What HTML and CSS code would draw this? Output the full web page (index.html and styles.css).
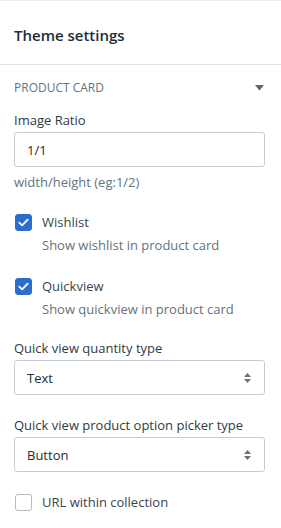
FILE: index.html
```html
<!DOCTYPE html>
<html lang="en">
<head>
  <meta charset="UTF-8" />
  <meta name="viewport" content="width=device-width, initial-scale=1.0" />
  <title>Theme settings</title>
  <link rel="stylesheet" href="styles.css">
</head>
<body>
  <div class="panel">

    <!-- Header -->
    <div class="panel-header">
      <div class="panel-title">Theme settings</div>
    </div>

    <!-- Product card section -->
    <div class="section">
      <div class="section-head">
        <span>PRODUCT CARD</span>
        <svg class="caret" width="9" height="6" viewBox="0 0 9 6"><path d="M0 0h9L4.5 5.5z" fill="#5c6670"/></svg>
      </div>

      <div class="field">
        <label class="field-label">Image Ratio</label>
        <div class="input">1/1</div>
        <div class="help">width/height (eg:1/2)</div>
      </div>

      <div class="check-field">
        <div class="check-row">
          <span class="checkbox checked">
            <svg width="11" height="9" viewBox="0 0 11 9"><path d="M1.3 4.6l2.8 2.7L9.7 1.6" fill="none" stroke="#fff" stroke-width="1.8" stroke-linecap="round" stroke-linejoin="round"/></svg>
          </span>
          <span class="check-label">Wishlist</span>
        </div>
        <div class="check-help">Show wishlist in product card</div>
      </div>

      <div class="check-field last">
        <div class="check-row">
          <span class="checkbox checked">
            <svg width="11" height="9" viewBox="0 0 11 9"><path d="M1.3 4.6l2.8 2.7L9.7 1.6" fill="none" stroke="#fff" stroke-width="1.8" stroke-linecap="round" stroke-linejoin="round"/></svg>
          </span>
          <span class="check-label">Quickview</span>
        </div>
        <div class="check-help">Show quickview in product card</div>
      </div>

      <div class="field">
        <label class="field-label">Quick view quantity type</label>
        <div class="select">
          <span>Text</span>
          <svg width="7" height="10" viewBox="0 0 7 10"><path d="M3.5 0L7 4H0zM0 6h7L3.5 10z" fill="#637381"/></svg>
        </div>
      </div>

      <div class="field">
        <label class="field-label">Quick view product option picker type</label>
        <div class="select">
          <span>Button</span>
          <svg width="7" height="10" viewBox="0 0 7 10"><path d="M3.5 0L7 4H0zM0 6h7L3.5 10z" fill="#637381"/></svg>
        </div>
      </div>

      <div class="check-field">
        <div class="check-row">
          <span class="checkbox"></span>
          <span class="check-label">URL within collection</span>
        </div>
      </div>
    </div>

  </div>
</body>
</html>
```

FILE: styles.css
```css
* {
  box-sizing: border-box;
  margin: 0;
  padding: 0;
}

html, body {
  height: 100%;
  background: #ffffff;
  font-family: "Segoe UI", "Open Sans", "Noto Sans", sans-serif;
  color: #303a44;
  font-size: 13px;
  line-height: 20px;
}

.panel {
  border-top: 1px solid #ebeef0;
  min-height: 100%;
}

.panel-header {
  height: 64px;
  padding: 23px 14px 0;
  border-bottom: 1px solid #dfe3e8;
}

.panel-title {
  font-size: 15px;
  font-weight: 600;
  line-height: 22px;
  color: #212b36;
}

.section {
  padding: 13px 16px 0 14px;
}

.section-head {
  display: flex;
  align-items: center;
  justify-content: space-between;
  font-size: 12px;
  color: #637381;
  margin-bottom: 12px;
}

.caret {
  margin-right: 1px;
}

.field {
  margin-bottom: 20px;
}

.field:first-of-type {
  margin-bottom: 19px;
}

.field-label {
  display: block;
  margin-bottom: 2px;
}

.input,
.select {
  height: 35px;
  border: 1px solid #c4cdd5;
  border-radius: 3px;
  padding: 0 12px;
  display: flex;
  align-items: center;
  color: #212b36;
}

.select {
  justify-content: space-between;
  padding-right: 13px;
}

.help {
  margin-top: 5px;
  color: #637381;
}

.check-field {
  margin-bottom: 21px;
}

.check-field.last {
  margin-bottom: 19px;
}

.check-row {
  display: flex;
  align-items: center;
}

.checkbox {
  width: 17px;
  height: 17px;
  border: 1px solid #b4bcc5;
  border-radius: 3px;
  margin: 0 10px 0 1px;
  display: flex;
  align-items: center;
  justify-content: center;
}

.checkbox.checked {
  background: #2c6ecb;
  border-color: #2c6ecb;
}

.check-label {
  color: #3a444f;
}

.check-help {
  margin: 3px 0 0 28px;
  color: #637381;
}
```
